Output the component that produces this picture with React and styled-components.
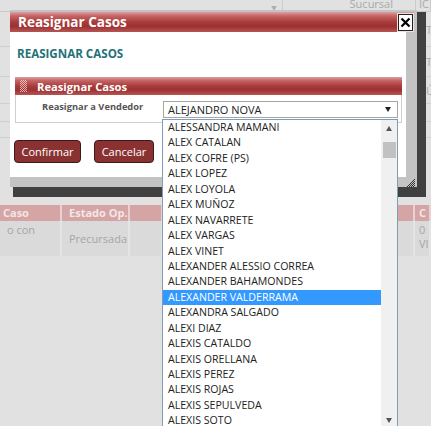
import React from 'react';
import styled, { createGlobalStyle } from 'styled-components';

const GlobalStyle = createGlobalStyle`
  html, body {
    margin: 0;
    padding: 0;
  }
  body {
    font-family: 'Open Sans', 'Liberation Sans', sans-serif;
    background: #e1e1e1;
  }
`;

const vendedores = [
  'ALESSANDRA MAMANI',
  'ALEX CATALAN',
  'ALEX COFRE (PS)',
  'ALEX LOPEZ',
  'ALEX LOYOLA',
  'ALEX MUÑOZ',
  'ALEX NAVARRETE',
  'ALEX VARGAS',
  'ALEX VINET',
  'ALEXANDER ALESSIO CORREA',
  'ALEXANDER BAHAMONDES',
  'ALEXANDER VALDERRAMA',
  'ALEXANDRA SALGADO',
  'ALEXI DIAZ',
  'ALEXIS CATALDO',
  'ALEXIS ORELLANA',
  'ALEXIS PEREZ',
  'ALEXIS ROJAS',
  'ALEXIS SEPULVEDA',
  'ALEXIS SOTO',
];
const selected = 'ALEXANDER VALDERRAMA';

const Page = styled.div`
  position: relative;
  width: 431px;
  height: 426px;
  overflow: hidden;
  background: #e1e1e1;
`;

/* page behind the modal */
const Backdrop = styled.div`
  display: flex;
  flex-direction: column;
`;

const TopHead = styled.div`
  display: flex;
  height: 11px;
  border-bottom: 1px solid #c9c9c9;
`;

const HeadCell = styled.div`
  width: ${(p) => (p.$w ? `${p.$w}px` : 'auto')};
  flex: ${(p) => (p.$w ? 'none' : '1')};
  display: flex;
  align-items: flex-end;
  justify-content: ${(p) => p.$align || 'flex-start'};
  overflow: hidden;
  box-sizing: border-box;
  padding: 0 ${(p) => p.$pr || 3}px 0 3px;
  border-right: 1px solid #cbcbcb;
  font-size: 11px;
  line-height: 14px;
  color: #a9a9a9;
`;

const BodyRow = styled.div`
  display: flex;
  height: ${(p) => p.$h}px;
  box-sizing: border-box;
  border-bottom: ${(p) => (p.$last ? 'none' : '1px solid #cfcfcf')};
`;

const StripCell = styled.div`
  width: ${(p) => (p.$w ? `${p.$w}px` : 'auto')};
  flex: ${(p) => (p.$w ? 'none' : '1')};
  display: flex;
  align-items: center;
  padding-left: 1px;
  font-size: 11px;
  color: #a9a9a9;
  overflow: hidden;
  white-space: nowrap;
`;

const TableHead = styled.div`
  display: flex;
  height: 16px;
  background: #d5a5a5;
`;

const THCell = styled.div`
  width: ${(p) => (p.$w ? `${p.$w}px` : 'auto')};
  flex: ${(p) => (p.$w ? 'none' : '1')};
  box-sizing: border-box;
  padding-left: ${(p) => p.$pl || 7}px;
  border-right: 2px solid #e6d2d2;
  font-size: 11px;
  font-weight: 700;
  line-height: 16px;
  color: #f3e6e6;
  white-space: nowrap;
  overflow: hidden;
`;

const TableRow = styled.div`
  display: flex;
  height: 35px;
  background: #dadada;
`;

const TDCell = styled.div`
  width: ${(p) => (p.$w ? `${p.$w}px` : 'auto')};
  flex: ${(p) => (p.$w ? 'none' : '1')};
  box-sizing: border-box;
  padding: ${(p) => p.$pt || 2}px 0 0 ${(p) => p.$pl || 7}px;
  border-right: 2px solid #e4e4e4;
  font-size: 11px;
  line-height: 14px;
  color: #a6a6a6;
  white-space: nowrap;
  overflow: hidden;
`;

/* modal */
const Shadow = styled.div`
  position: absolute;
  left: 13px;
  top: 12px;
  width: 413px;
  height: 185px;
  background: #404040;
`;

const Dialog = styled.div`
  position: absolute;
  left: 10px;
  top: 10px;
  width: 407px;
  height: 177px;
  box-sizing: border-box;
  padding-top: 2px;
  background: #c3c3c3;
  display: flex;
  flex-direction: column;
`;

const barGradient = `linear-gradient(
  to bottom,
  #dba0a0 0%,
  #c56464 20%,
  #a83b3b 50%,
  #9d3131 72%,
  #b65555 100%
)`;

const TitleBar = styled.div`
  width: 404px;
  height: 20px;
  box-sizing: border-box;
  padding: 0 1px 0 8px;
  display: flex;
  align-items: center;
  justify-content: space-between;
  background: ${barGradient};
  color: #fff;
  font-size: 13.5px;
  font-weight: 700;
`;

const CloseButton = styled.button`
  width: 15px;
  height: 17px;
  padding: 0;
  display: flex;
  align-items: center;
  justify-content: center;
  background: #fff;
  border: 1px solid #222;
  outline: 1px solid #f0e0e0;
  cursor: pointer;
`;

const Content = styled.div`
  width: 396px;
  flex: 1;
  background: #fff;
  display: flex;
  flex-direction: column;
`;

const Footer = styled.div`
  height: 10px;
  display: flex;
  justify-content: flex-end;
  align-items: flex-start;
  padding: 2px 2px 0 0;
  box-sizing: border-box;
`;

const Heading = styled.h2`
  margin: 14px 0 0 7px;
  font-size: 11.6px;
  line-height: 16px;
  font-weight: 700;
  color: #1f7278;
`;

const Panel = styled.section`
  margin: 15px 0 0 5px;
  width: 387px;
`;

const PanelHeader = styled.div`
  height: 18px;
  display: flex;
  align-items: center;
  gap: 10px;
  padding-left: 5px;
  background: ${barGradient};
  color: #fff;
  font-size: 11.2px;
  font-weight: 700;
`;

const Grip = styled.span`
  width: 7px;
  height: 12px;
  background-image: conic-gradient(
    rgba(255, 225, 225, 0.7) 25%,
    transparent 0 50%,
    rgba(255, 225, 225, 0.7) 0 75%,
    transparent 0
  );
  background-size: 2px 2px;
`;

const PanelBody = styled.div`
  height: 28px;
  box-sizing: border-box;
  border: 1px solid #cfcfcf;
  border-top: none;
  display: flex;
  align-items: flex-start;
`;

const Label = styled.label`
  width: 147px;
  box-sizing: border-box;
  padding: 5px 0 0 26px;
  font-size: 9.3px;
  line-height: 14px;
  font-weight: 700;
  color: #555;
`;

const SelectBox = styled.div`
  margin-top: 6px;
  width: 235px;
  height: 17px;
  box-sizing: border-box;
  border: 1px solid #a6a6a6;
  padding: 0 6px 0 4px;
  display: flex;
  align-items: center;
  justify-content: space-between;
  font-size: 11px;
  color: #222;
`;

const Arrow = styled.span`
  width: 0;
  height: 0;
  border-left: 3.5px solid transparent;
  border-right: 3.5px solid transparent;
  border-${(p) => (p.$up ? 'bottom' : 'top')}: 5px solid ${(p) => p.$color || '#222'};
`;

const Actions = styled.div`
  margin: 17px 0 0 4px;
  display: flex;
  gap: 13px;
`;

const Button = styled.button`
  width: ${(p) => p.$w}px;
  height: 23px;
  padding: 0;
  border: 1px solid #3a1c1c;
  border-radius: 4px;
  background: #8a3232;
  color: #fff;
  font-family: inherit;
  font-size: 11px;
`;

/* open dropdown */
const ListBox = styled.div`
  position: absolute;
  left: 162px;
  top: 119px;
  width: 236px;
  height: 311px;
  box-sizing: border-box;
  border: 1px solid #7f9db9;
  background: #fff;
  display: flex;
`;

const Options = styled.ul`
  flex: 1;
  margin: 0;
  padding: 0;
  list-style: none;
`;

const Option = styled.li`
  height: 15.45px;
  line-height: 15.45px;
  padding-left: 5px;
  font-size: 10.6px;
  white-space: nowrap;
  color: ${(p) => (p.$active ? '#fff' : '#222')};
  background: ${(p) => (p.$active ? '#3399ff' : 'transparent')};
`;

const Scrollbar = styled.div`
  width: 16px;
  background: #f0f0f0;
  display: flex;
  flex-direction: column;
  align-items: center;
`;

const ScrollArrow = styled.div`
  height: 17px;
  display: flex;
  align-items: center;
  justify-content: center;
`;

const Thumb = styled.div`
  margin-top: 5px;
  width: 13px;
  height: 16px;
  background: #c1c1c1;
`;

const Spacer = styled.div`
  flex: 1;
`;

const ResizeGrip = () => {
  const dots = [];
  for (let y = 0; y < 8; y++) {
    for (let x = 0; x < 8; x++) {
      if (x + y >= 7 && (x + y) % 2 === 1) {
        dots.push(<rect key={`${x}-${y}`} x={x} y={y} width='1' height='1' />);
      }
    }
  }
  return (
    <svg width='8' height='8' viewBox='0 0 8 8' fill='#333'>
      {dots}
    </svg>
  );
};

const App = () => {
  return (
    <Page>
      <GlobalStyle />
      <Backdrop>
        <TopHead>
          <HeadCell $w={283} $align='flex-end' $pr={5}>
            <Arrow $color='#b0b0b0' />
          </HeadCell>
          <HeadCell $w={133} $align='flex-end' $pr={22}>
            Sucursal
          </HeadCell>
          <HeadCell>IC</HeadCell>
        </TopHead>
        <BodyRow $h={35}>
          <StripCell $w={10} />
          <StripCell />
          <StripCell $w={5}>To</StripCell>
        </BodyRow>
        <BodyRow $h={30}>
          <StripCell $w={10} />
          <StripCell />
          <StripCell $w={5}>To</StripCell>
        </BodyRow>
        <BodyRow $h={27}>
          <StripCell $w={10} />
          <StripCell />
          <StripCell $w={5}>Ú</StripCell>
        </BodyRow>
        <BodyRow $h={18}>
          <StripCell $w={10} />
        </BodyRow>
        <BodyRow $h={16}>
          <StripCell $w={10} />
        </BodyRow>
        <BodyRow $h={67} $last />
        <TableHead>
          <THCell $w={62} $pl={3}>Caso</THCell>
          <THCell $w={68}>Estado Op.</THCell>
          <THCell $w={33} />
          <THCell $w={252} />
          <THCell $pl={4}>C</THCell>
        </TableHead>
        <TableRow>
          <TDCell $w={62} $pl={0}>o con</TDCell>
          <TDCell $w={68} $pt={11}>Precursada</TDCell>
          <TDCell $w={33} />
          <TDCell $w={252} />
          <TDCell $pl={4}>
            0
            <br />
            VIS
          </TDCell>
        </TableRow>
      </Backdrop>

      <Shadow />
      <Dialog>
        <TitleBar>
          <span>Reasignar Casos</span>
          <CloseButton aria-label='Cerrar'>
            <svg width='11' height='11' viewBox='0 0 11 11'>
              <path d='M1.5 1.5 L9.5 9.5 M9.5 1.5 L1.5 9.5' stroke='#000' strokeWidth='2.2' />
            </svg>
          </CloseButton>
        </TitleBar>
        <Content>
          <Heading>REASIGNAR CASOS</Heading>
          <Panel>
            <PanelHeader>
              <Grip />
              Reasignar Casos
            </PanelHeader>
            <PanelBody>
              <Label>Reasignar a Vendedor</Label>
              <SelectBox>
                ALEJANDRO NOVA
                <Arrow />
              </SelectBox>
            </PanelBody>
          </Panel>
          <Actions>
            <Button $w={67}>Confirmar</Button>
            <Button $w={60}>Cancelar</Button>
          </Actions>
        </Content>
        <Footer>
          <ResizeGrip />
        </Footer>
      </Dialog>

      <ListBox>
        <Options>
          {vendedores.map((name) => (
            <Option key={name} $active={name === selected}>
              {name}
            </Option>
          ))}
        </Options>
        <Scrollbar>
          <ScrollArrow>
            <Arrow $up $color='#555' />
          </ScrollArrow>
          <Thumb />
          <Spacer />
          <ScrollArrow>
            <Arrow $color='#555' />
          </ScrollArrow>
        </Scrollbar>
      </ListBox>
    </Page>
  );
};

export default App;
